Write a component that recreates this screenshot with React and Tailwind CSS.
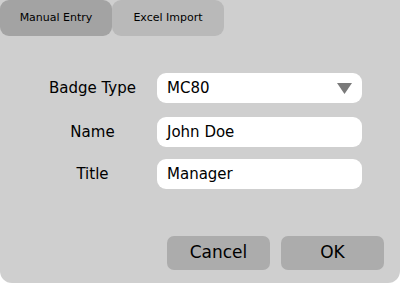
export default function App() {
    const rows = [
        { label: "Badge Type", value: "MC80", select: true, mt: "mt-0" },
        { label: "Name", value: "John Doe", mt: "mt-[14px]" },
        { label: "Title", value: "Manager", mt: "mt-[12px]" },
    ];

    return (
        <div className="w-[400px] h-[283px] bg-white">
            <div className="w-[400px] h-[283px] bg-[#cfcfcf] rounded-b-[12px] flex flex-col font-['DejaVu_Sans',sans-serif] text-black">
                {/* Tabs */}
                <div className="flex h-[36px]">
                    <div className="w-[112px] h-full rounded-[9px] bg-[#a3a3a3] flex items-center justify-center text-[11px]">
                        Manual Entry
                    </div>
                    <div className="w-[112px] h-full rounded-[9px] bg-[#b9b9b9] flex items-center justify-center text-[11px]">
                        Excel Import
                    </div>
                </div>

                {/* Form */}
                <div className="flex flex-col mt-[37px]">
                    {rows.map((row) => (
                        <div key={row.label} className={`flex items-center ${row.mt}`}>
                            <div className="w-[111px] ml-[37px] text-center text-[15px]">{row.label}</div>
                            <div className="ml-[9px] w-[205px] h-[30px] bg-white rounded-[9px] flex items-center justify-between pl-[10px] pr-[10px] text-[15px]">
                                <span>{row.value}</span>
                                {row.select && (
                                    <svg width="15" height="11" viewBox="0 0 15 11">
                                        <polygon points="0,0 15,0 7.5,11" fill="#7a7a7a" />
                                    </svg>
                                )}
                            </div>
                        </div>
                    ))}
                </div>

                {/* Buttons */}
                <div className="flex justify-end gap-[11px] pr-[16px] mt-auto mb-[13px]">
                    <button className="w-[103px] h-[34px] rounded-[7px] bg-[#acacac] text-[17px]">Cancel</button>
                    <button className="w-[103px] h-[34px] rounded-[7px] bg-[#acacac] text-[17px]">OK</button>
                </div>
            </div>
        </div>
    );
}
